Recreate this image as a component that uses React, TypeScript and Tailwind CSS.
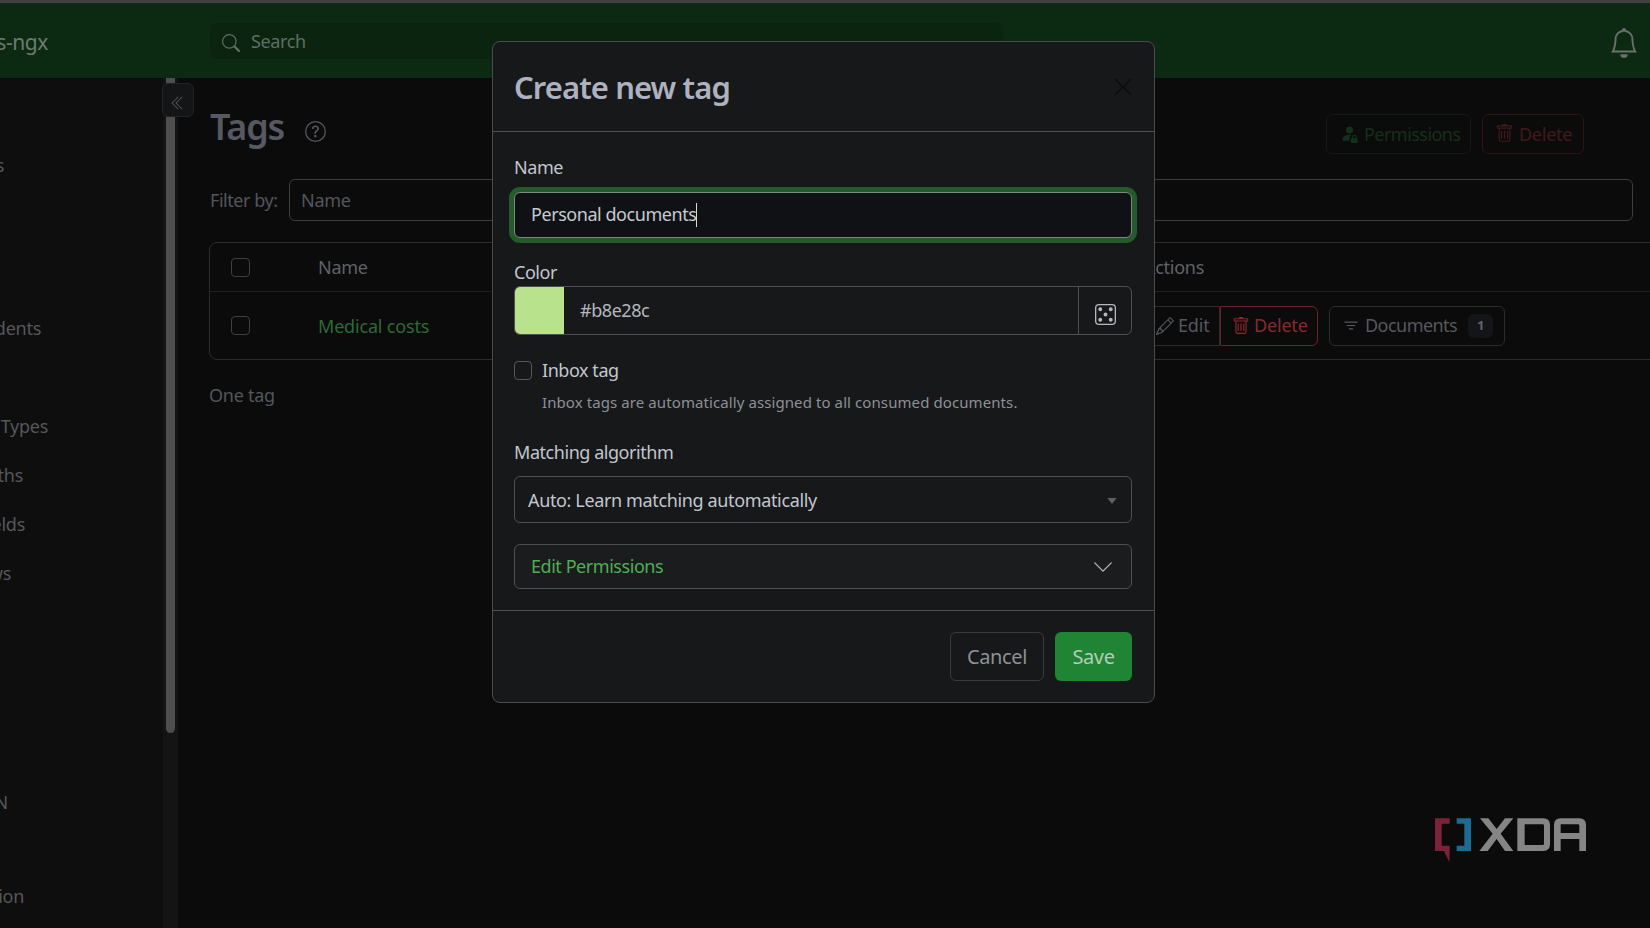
import React from "react";
import {
  BsBell,
  BsChevronDoubleLeft,
  BsChevronDown,
  BsDice5,
  BsFilter,
  BsPencil,
  BsPersonFillLock,
  BsQuestionCircle,
  BsSearch,
  BsTrash,
  BsXLg,
} from "react-icons/bs";

const font = { fontFamily: '"Noto Sans", "Open Sans", sans-serif' };

function SideItem({ text, mt, edge }: { text: string; mt: number; edge: number }) {
  return (
    <div
      className="flex h-6 shrink-0 items-center justify-end whitespace-nowrap text-[18px] tracking-[-0.015em] text-[#55575c]"
      style={{ marginTop: mt, width: edge }}
    >
      {text}
    </div>
  );
}

function XdaLogo() {
  return (
    <svg viewBox="0 0 660 270" className="absolute left-[1400px] top-[790px] h-[90px] w-[220px]">
      <path d="M105 85h44v16h-24v66h24v16l-1 34-16-34h-27z" fill="#7d2339" />
      <path d="M170 85h43v98h-43v-16h23v-66h-23z" fill="#1d6a94" />
      <path d="M340 85l-38 46 38 52h-25l-25-36-27 36h-25l40-52-38-46h25l25 32 25-32z" fill="#858585" />
      <path d="M352 85h78q20 0 20 20v58q0 20-20 20h-78zM374 103v62h54q4 0 4-4v-54q0-4-4-4z" fill="#858585" fillRule="evenodd" />
      <path d="M462 105q0-20 20-20h56q20 0 20 20v78h-20v-36h-56v36h-20zM482 103v26h56v-22q0-4-4-4z" fill="#858585" fillRule="evenodd" />
    </svg>
  );
}

function Background() {
  return (
    <div className="flex h-full w-full flex-col">
      <div className="h-[3px] shrink-0 bg-[#403f42]" />
      <header className="flex h-[75px] shrink-0 items-center bg-[#0c2a12]">
        <div className="flex w-[48px] translate-y-[2px] justify-end whitespace-nowrap text-[21px] tracking-[-0.02em] text-[#6d7a70]">
          Paperless-ngx
        </div>
        <div className="ml-[162px] flex h-[36px] w-[793px] items-center rounded-md bg-[#0b2410] pl-3 text-[18px] tracking-[-0.02em] text-[#5f6e62]">
          <BsSearch className="mr-[11px] h-[18px] w-[18px] translate-y-[2px]" />
          <span className="translate-y-[1px]">Search</span>
        </div>
        <div className="ml-auto mr-[11px] text-[#6a706c]">
          <BsBell className="h-[30px] w-[30px] translate-y-[2px]" />
        </div>
      </header>
      <div className="flex min-h-0 flex-1">
        <aside className="flex w-[163px] shrink-0 flex-col overflow-hidden bg-[#0e0e0e]">
          <SideItem text="Documents" mt={75} edge={4} />
          <SideItem text="Correspondents" mt={139} edge={41} />
          <SideItem text="Document Types" mt={74} edge={48} />
          <SideItem text="Storage Paths" mt={25} edge={23} />
          <SideItem text="Custom Fields" mt={25} edge={25} />
          <SideItem text="Workflows" mt={25} edge={11} />
          <SideItem text="ADMIN" mt={205} edge={8} />
          <SideItem text="Documentation" mt={70} edge={24} />
        </aside>
        <div className="w-[15px] shrink-0 bg-[#141414] pl-[3px]">
          <div className="h-[655px] w-[9px] rounded-b-md bg-[#4e4e4e]" />
        </div>
        <main className="min-w-0 flex-1 overflow-hidden bg-[#0b0b0b] pl-[31px] pt-[36px]">
          <div className="flex h-[39px] items-center pr-[66px]">
            <h1 className="ml-px -translate-y-[7px] text-[36px] font-semibold leading-none tracking-[-0.035em] text-[#565862]">Tags</h1>
            <BsQuestionCircle className="ml-[21px] h-[21px] w-[21px] -translate-y-[2px] text-[#55575c]" />
            <button className="ml-auto flex h-[40px] w-[145px] items-center rounded-md border border-[#121a15] pl-[13px] text-[18px] tracking-[-0.03em] text-[#15301a]">
              <BsPersonFillLock className="mr-[5px] h-[19px] w-[19px]" />
              <span className="translate-y-[1px]">Permissions</span>
            </button>
            <button className="ml-[11px] flex h-[40px] w-[102px] items-center rounded-md border border-[#331215] pl-[12px] text-[18px] tracking-[-0.015em] text-[#421a1d]">
              <BsTrash className="mr-[5px] h-[19px] w-[19px]" />
              <span className="translate-y-[1px]">Delete</span>
            </button>
          </div>
          <div className="mt-[26px] flex h-[42px] items-center pr-[17px]">
            <span className="ml-px w-[79px] text-[18px] tracking-[-0.025em] text-[#54565c]">Filter by:</span>
            <div className="flex h-full flex-1 items-center rounded-md border border-[#3e3e40] pl-[11px] text-[18px] tracking-[-0.015em] text-[#54565c]">
              Name
            </div>
          </div>
          <div className="mt-[21px] w-[1520px] rounded-lg border border-[#2b2c2e]">
            <div className="flex h-[49px] items-center border-b border-[#1e1f20] pl-[21px] text-[18px] tracking-[-0.015em] text-[#5f6268]">
              <span className="h-[19px] w-[19px] rounded border border-[#3e3f42]" />
              <span className="ml-[68px] w-[826px]">Name</span>
              <span>Actions</span>
            </div>
            <div className="flex h-[67px] items-center pl-[21px] text-[18px] tracking-[-0.01em]">
              <span className="h-[19px] w-[19px] rounded border border-[#3e3f42]" />
              <span className="ml-[68px] w-[826px] translate-y-[1px] text-[#2c6a34]">Medical costs</span>
              <div className="flex h-[40px] w-[76px] items-center rounded-l-md border border-[#2b2c2e] pl-[11px] text-[#55585e]">
                <BsPencil className="mr-[4px] h-[18px] w-[18px]" />
                Edit
              </div>
              <div className="flex h-[40px] w-[98px] items-center rounded-r-md border border-[#6a2226] pl-[11px] text-[#8a2a2e]">
                <BsTrash className="mr-[4px] h-[18px] w-[18px]" />
                Delete
              </div>
              <div className="ml-[11px] flex h-[40px] w-[176px] items-center rounded-md border border-[#2b2c2e] pl-[12px] tracking-[-0.03em] text-[#55585e]">
                <BsFilter className="mr-[5px] h-[18px] w-[18px]" />
                Documents
                <span className="ml-auto mr-[11px] flex h-[24px] w-[25px] items-center justify-center rounded-md bg-[#141518] text-[13px] font-bold text-[#5f6268]">
                  1
                </span>
              </div>
            </div>
          </div>
          <div className="mt-[23px] text-[18px] leading-6 tracking-[-0.015em] text-[#54565c]">One tag</div>
        </main>
      </div>
    </div>
  );
}

function Modal() {
  const label = "block h-6 -translate-y-px text-[18px] leading-6 tracking-[-0.025em] text-[#c2c6ce]";
  return (
    <div className="absolute left-[492px] top-[41px] flex w-[663px] flex-col rounded-lg border border-[#4a4b4d] bg-[#17181a]">
      <div className="flex h-[90px] items-center border-b border-[#4f5052] pl-[21px] pr-[20px]">
        <h2 className="translate-y-[1px] text-[31px] font-semibold tracking-[-0.03em] text-[#aeb2bf]">Create new tag</h2>
        <BsXLg className="ml-auto h-[22px] w-[22px] text-[#0b0b0c]" />
      </div>
      <div className="pb-[21px] pl-[21px] pr-[22px] pt-[24px]">
        <label className={label}>Name</label>
        <div className="mt-[12px] flex h-[46px] items-center rounded-md border border-[#7a8a7c] bg-[#101114] pl-[16px] text-[18px] tracking-[-0.025em] text-[#c6cad2] shadow-[0_0_0_5px_#245a2c]">
          <span className="-translate-y-px">Personal documents</span>
          <span className="h-[24px] w-px bg-[#d8d8d8]" />
        </div>
        <label className={`mt-[23px] ${label}`}>Color</label>
        <div className="mt-px flex h-[49px] overflow-hidden rounded-md border border-[#4e4f52]">
          <div className="w-[49px] bg-[#b8e28c]" />
          <div className="flex flex-1 items-center pl-[16px] text-[18px] tracking-[-0.025em] text-[#b4b7be]">#b8e28c</div>
          <div className="flex w-[53px] items-center justify-center border-l border-[#4e4f52] text-[#b4b7be]">
            <BsDice5 className="h-[21px] w-[21px] translate-y-[4px]" />
          </div>
        </div>
        <div className="mt-[26px] flex h-[19px] items-center">
          <span className="h-[19px] w-[18px] rounded border border-[#55565a]" />
          <span className="ml-[10px] text-[18px] tracking-[-0.025em] text-[#c2c6ce]">Inbox tag</span>
        </div>
        <div className="ml-[28px] mt-[12px] h-5 text-[15px] leading-5 tracking-[0.006em] text-[#8d9097]">
          Inbox tags are automatically assigned to all consumed documents.
        </div>
        <label className={`mt-[29px] ${label}`}>Matching algorithm</label>
        <div className="mt-[11px] flex h-[47px] items-center rounded-md border border-[#4e4f52] pl-[13px] pr-[14px] text-[18px] tracking-[-0.02em] text-[#c2c6ce]">
          <span className="translate-y-px">Auto: Learn matching automatically</span>
          <svg viewBox="0 0 12 8" className="ml-auto h-[6px] w-[10px] translate-y-[1px]">
            <path d="M0 0h12L6 8z" fill="#5f6166" />
          </svg>
        </div>
        <div className="mt-[21px] flex h-[45px] items-center rounded-md border border-[#4e4f52] bg-[#1b1c1e] pl-[16px] pr-[17px] text-[18px] tracking-[-0.025em] text-[#4fae54]">
          Edit Permissions
          <BsChevronDown className="ml-auto h-[22px] w-[22px] text-[#b4b7be]" />
        </div>
      </div>
      <div className="flex justify-end gap-[11px] border-t border-[#4f5052] pb-[21px] pl-[21px] pr-[22px] pt-[21px]">
        <button className="h-[49px] w-[94px] rounded-md border border-[#3a3b3e] text-[20px] tracking-[-0.02em] text-[#8e9197]">Cancel</button>
        <button className="h-[49px] w-[77px] rounded-md bg-[#1f8534] text-[20px] tracking-[-0.02em] text-[#b4ccb8]">Save</button>
      </div>
    </div>
  );
}

export default function App() {
  return (
    <div className="relative h-[928px] w-[1650px] overflow-hidden bg-[#0b0b0b]" style={font}>
      <Background />
      <div className="absolute left-[162px] top-[83px] flex h-[34px] w-[32px] items-center justify-center rounded-md border border-[#222325] bg-[#141517] text-[#55575c]">
        <BsChevronDoubleLeft className="h-[16px] w-[16px] translate-y-[3px]" />
      </div>
      <Modal />
      <XdaLogo />
    </div>
  );
}
